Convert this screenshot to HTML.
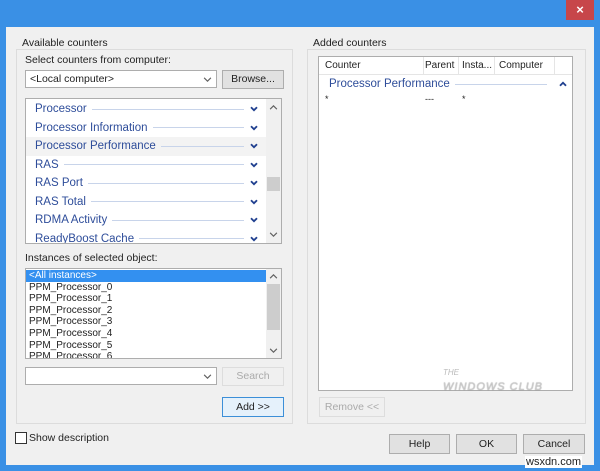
<!DOCTYPE html>
<html><head><style>
*{box-sizing:border-box;margin:0;padding:0}
body{width:600px;height:471px;background:#3a90e5;font-family:"Liberation Sans",sans-serif;font-size:11px;color:#222;position:relative;overflow:hidden}
.a{position:absolute}
.body{left:6px;top:27px;width:588px;height:438px;background:#f0f0f0}
.grp{border:1px solid #dcdcdc}
.lbl{background:#f0f0f0;padding:0 2px;font-size:10.5px}
.box{background:#fff;border:1px solid #adadad}
.btn{background:#e1e1e1;border:1px solid #adadad;text-align:center;font-size:10.5px}
.row{color:#2e4d9a;font-size:11.5px;height:18.5px;line-height:18px;display:flex;align-items:center;padding-left:9px;padding-right:8px}
.ln{flex:1;height:1px;background:#c8d4ea;margin:0 6px 0 5px}
.inst{height:11.6px;line-height:11.6px;font-size:10px;padding-left:3px}
.sb{background:#f0f0f0}
</style></head><body>
<svg width="0" height="0" style="position:absolute"><defs>
<symbol id="cd" viewBox="0 0 8 6"><path d="M1 1.2 L4 4.2 L7 1.2" fill="none" stroke="#1f3f8f" stroke-width="1.8"/></symbol>
<symbol id="cu" viewBox="0 0 8 6"><path d="M1 4.8 L4 1.8 L7 4.8" fill="none" stroke="#1f3f8f" stroke-width="1.8"/></symbol>
<symbol id="sd" viewBox="0 0 8 6"><path d="M1 1.5 L4 4.5 L7 1.5" fill="none" stroke="#606060" stroke-width="1"/></symbol>
<symbol id="su" viewBox="0 0 8 6"><path d="M1 4.5 L4 1.5 L7 4.5" fill="none" stroke="#606060" stroke-width="1"/></symbol>
</defs></svg>
<div class="a" style="left:566px;top:0;width:28px;height:20px;background:#c7464a;color:#fff;text-align:center;line-height:19px;font-size:13px;font-weight:bold">×</div>
<div class="a body"></div>
<div class="a grp" style="left:16px;top:49px;width:277px;height:375px"></div>
<div class="a lbl" style="left:20px;top:37px">Available counters</div>
<div class="a grp" style="left:307px;top:49px;width:279px;height:375px"></div>
<div class="a lbl" style="left:311px;top:37px">Added counters</div>
<div class="a" style="left:25px;top:54px;font-size:10.5px">Select counters from computer:</div>
<div class="a box" style="left:25px;top:70px;width:192px;height:18px;padding:2px 4px;font-size:10.5px">&lt;Local computer&gt;<svg class="a" style="right:4px;top:5px" width="9" height="7"><use href="#sd"/></svg></div>
<div class="a btn" style="left:222px;top:70px;width:62px;height:19px;line-height:17px">Browse...</div>
<div class="a box" style="left:25px;top:98px;width:257px;height:146px;overflow:hidden">
 <div class="a sb" style="right:0;top:0;width:15px;height:144px"><div class="a" style="left:1px;top:78px;width:13px;height:14px;background:#cdcdcd"></div><svg class="a" style="left:3px;top:5px" width="9" height="7"><use href="#su"/></svg><svg class="a" style="left:3px;bottom:5px" width="9" height="7"><use href="#sd"/></svg></div>
 <div class="a" style="left:0;top:1px;width:240px">
 <div class="row">Processor<div class="ln"></div><svg width="8" height="6"><use href="#cd"/></svg></div>
 <div class="row">Processor Information<div class="ln"></div><svg width="8" height="6"><use href="#cd"/></svg></div>
 <div class="row" style="background:#f3f3f3">Processor Performance<div class="ln"></div><svg width="8" height="6"><use href="#cd"/></svg></div>
 <div class="row">RAS<div class="ln"></div><svg width="8" height="6"><use href="#cd"/></svg></div>
 <div class="row">RAS Port<div class="ln"></div><svg width="8" height="6"><use href="#cd"/></svg></div>
 <div class="row">RAS Total<div class="ln"></div><svg width="8" height="6"><use href="#cd"/></svg></div>
 <div class="row">RDMA Activity<div class="ln"></div><svg width="8" height="6"><use href="#cd"/></svg></div>
 <div class="row">ReadyBoost Cache<div class="ln"></div><svg width="8" height="6"><use href="#cd"/></svg></div>
 </div>
</div>
<div class="a" style="left:25px;top:252px;font-size:10.5px">Instances of selected object:</div>
<div class="a box" style="left:25px;top:268px;width:257px;height:91px;overflow:hidden">
 <div class="a sb" style="right:0;top:0;width:15px;height:89px"><div class="a" style="left:1px;top:15px;width:13px;height:46px;background:#cdcdcd"></div><svg class="a" style="left:3px;top:4px" width="9" height="7"><use href="#su"/></svg><svg class="a" style="left:3px;bottom:4px" width="9" height="7"><use href="#sd"/></svg></div>
 <div style="width:240px;padding-top:1px">
 <div class="inst" style="background:#3390f0;color:#fff">&lt;All instances&gt;</div>
 <div class="inst">PPM_Processor_0</div><div class="inst">PPM_Processor_1</div><div class="inst">PPM_Processor_2</div><div class="inst">PPM_Processor_3</div><div class="inst">PPM_Processor_4</div><div class="inst">PPM_Processor_5</div><div class="inst">PPM_Processor_6</div>
 </div>
</div>
<div class="a box" style="left:25px;top:367px;width:192px;height:18px"><svg class="a" style="right:4px;top:5px" width="9" height="7"><use href="#sd"/></svg></div>
<div class="a btn" style="left:222px;top:367px;width:62px;height:19px;line-height:17px;background:#f0f0f0;border-color:#ddd;color:#aaa">Search</div>
<div class="a btn" style="left:222px;top:397px;width:62px;height:20px;line-height:18px;background:#e5f1fb;border-color:#3c8fd8">Add &gt;&gt;</div>
<div class="a" style="left:15px;top:432px;width:12px;height:12px;background:#fff;border:1px solid #333"></div>
<div class="a" style="left:29px;top:432px;font-size:10.5px">Show description</div>
<div class="a box" style="left:318px;top:56px;width:255px;height:335px;overflow:hidden">
 <div class="a" style="left:0;top:0;width:253px;height:18px;border-bottom:1px solid #e5e5e5;font-size:10px;line-height:17px">
  <span class="a" style="left:6px">Counter</span><span class="a" style="left:104px;top:0;height:17px;border-left:1px solid #e5e5e5"></span><span class="a" style="left:106px">Parent</span><span class="a" style="left:139px;height:17px;border-left:1px solid #e5e5e5"></span><span class="a" style="left:143px">Insta...</span><span class="a" style="left:175px;height:17px;border-left:1px solid #e5e5e5"></span><span class="a" style="left:180px">Computer</span><span class="a" style="left:235px;height:17px;border-left:1px solid #e5e5e5"></span>
 </div>
 <div class="a row" style="left:1px;top:18px;width:251px;padding-right:4px">Processor Performance<div class="ln" style="margin-right:12px"></div><svg width="8" height="6"><use href="#cu"/></svg></div>
 <div class="a" style="left:6px;top:37px;font-size:9px">*</div><div class="a" style="left:106px;top:37px;font-size:9px">---</div><div class="a" style="left:143px;top:37px;font-size:9px">*</div>
</div>
<div class="a" style="left:443px;top:368px;color:#bbb;font-style:italic;font-size:8px">THE</div>
<div class="a" style="left:443px;top:381px;color:#ccc;font-style:italic;font-size:11px;letter-spacing:1px;text-shadow:0 0 1px #888">WINDOWS CLUB</div>
<div class="a btn" style="left:319px;top:397px;width:66px;height:20px;line-height:18px;background:#f0f0f0;border-color:#ddd;color:#aaa">Remove &lt;&lt;</div>
<div class="a btn" style="left:389px;top:434px;width:61px;height:20px;line-height:18px">Help</div>
<div class="a btn" style="left:456px;top:434px;width:61px;height:20px;line-height:18px">OK</div>
<div class="a btn" style="left:523px;top:434px;width:62px;height:20px;line-height:18px">Cancel</div>
<div class="a" style="left:525px;top:456px;font-size:11px;color:#222;background:#fff;padding:0 1px">wsxdn.com</div>
</body></html>
